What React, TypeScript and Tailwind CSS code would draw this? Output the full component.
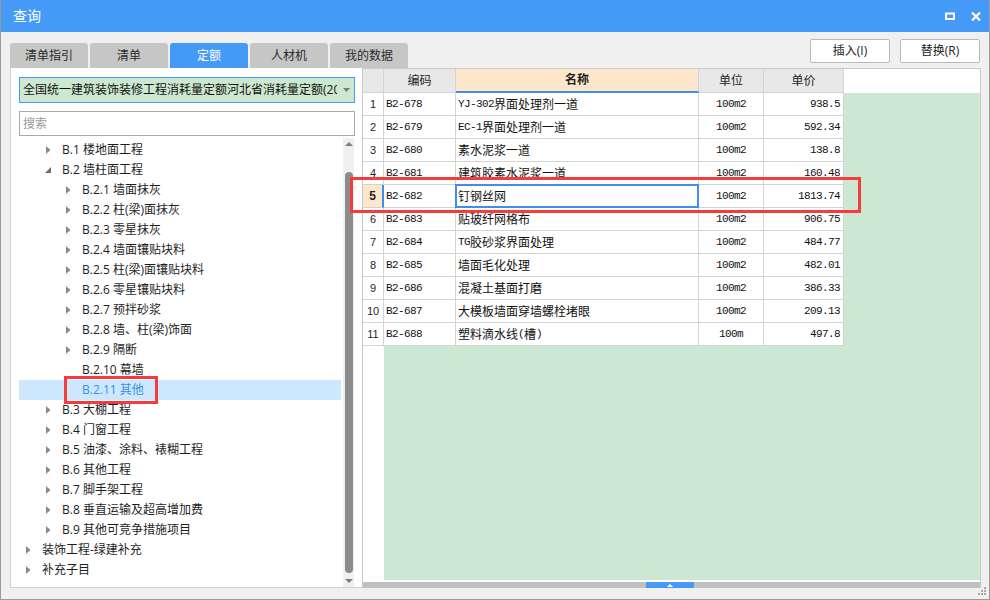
import React from "react";

const F = "font-['Open_Sans','Noto_Sans_CJK_SC',sans-serif]";

function Mixed({ text }: { text: string }) {
  const parts = text.match(/[\x00-\x7f]+|[^\x00-\x7f]+/g) || [];
  return (
    <>
      {parts.map((p, i) =>
        /^[\x00-\x7f]+$/.test(p) ? (
          <span key={i} className="font-['Liberation_Mono',monospace] text-[11px] tracking-[-0.6px]">
            {p}
          </span>
        ) : (
          <span key={i} className="font-['Noto_Sans_CJK_SC',sans-serif] text-[12px]">
            {p}
          </span>
        )
      )}
    </>
  );
}

type Node = { l: 0 | 1 | 2; t: string; a: "r" | "d" | null; sel?: boolean };

const tree: Node[] = [
  { l: 1, t: "B.1 楼地面工程", a: "r" },
  { l: 1, t: "B.2 墙柱面工程", a: "d" },
  { l: 2, t: "B.2.1 墙面抹灰", a: "r" },
  { l: 2, t: "B.2.2 柱(梁)面抹灰", a: "r" },
  { l: 2, t: "B.2.3 零星抹灰", a: "r" },
  { l: 2, t: "B.2.4 墙面镶贴块料", a: "r" },
  { l: 2, t: "B.2.5 柱(梁)面镶贴块料", a: "r" },
  { l: 2, t: "B.2.6 零星镶贴块料", a: "r" },
  { l: 2, t: "B.2.7 预拌砂浆", a: "r" },
  { l: 2, t: "B.2.8 墙、柱(梁)饰面", a: "r" },
  { l: 2, t: "B.2.9 隔断", a: "r" },
  { l: 2, t: "B.2.10 幕墙", a: null },
  { l: 2, t: "B.2.11 其他", a: null, sel: true },
  { l: 1, t: "B.3 大棚工程", a: "r" },
  { l: 1, t: "B.4 门窗工程", a: "r" },
  { l: 1, t: "B.5 油漆、涂料、裱糊工程", a: "r" },
  { l: 1, t: "B.6 其他工程", a: "r" },
  { l: 1, t: "B.7 脚手架工程", a: "r" },
  { l: 1, t: "B.8 垂直运输及超高增加费", a: "r" },
  { l: 1, t: "B.9 其他可竞争措施项目", a: "r" },
  { l: 0, t: "装饰工程-绿建补充", a: "r" },
  { l: 0, t: "补充子目", a: "r" },
];

const rows = [
  ["B2-678", "YJ-302界面处理剂一道", "100m2", "938.5"],
  ["B2-679", "EC-1界面处理剂一道", "100m2", "592.34"],
  ["B2-680", "素水泥浆一道", "100m2", "138.8"],
  ["B2-681", "建筑胶素水泥浆一道", "100m2", "160.48"],
  ["B2-682", "钉钢丝网", "100m2", "1813.74"],
  ["B2-683", "贴玻纤网格布", "100m2", "906.75"],
  ["B2-684", "TG胶砂浆界面处理", "100m2", "484.77"],
  ["B2-685", "墙面毛化处理", "100m2", "482.01"],
  ["B2-686", "混凝土基面打磨", "100m2", "386.33"],
  ["B2-687", "大模板墙面穿墙螺栓堵眼", "100m2", "209.13"],
  ["B2-688", "塑料滴水线(槽)", "100m", "497.8"],
];

const padCls = ["pl-[3px]", "pl-[23px]", "pl-[43px]"];

function Arrow({ a }: { a: "r" | "d" | null }) {
  if (a === "r")
    return (
      <svg width="5" height="8" viewBox="0 0 5 8">
        <polygon points="0,0 4.5,4 0,8" fill="#8a8a8a" />
      </svg>
    );
  if (a === "d")
    return (
      <svg width="6" height="6" viewBox="0 0 6 6">
        <polygon points="6,0 6,6 0,6" fill="#6f6f6f" />
      </svg>
    );
  return null;
}

const tabs = ["清单指引", "清单", "定额", "人材机", "我的数据"];

export default function App() {
  return (
    <div className={`relative w-[990px] h-[600px] overflow-hidden bg-[#f0f0f0] border-x border-b border-[#9a9a9a] ${F} text-[12px] text-[#1f1f1f]`}>
      {/* title bar */}
      <div className="h-[32px] bg-[#4599f7] flex items-center pl-[12px] pr-[8px]">
        <span className="text-[14px] text-white leading-none">查询</span>
        <div className="ml-auto flex items-center gap-[16px]">
          <svg width="10" height="8" viewBox="0 0 10 8">
            <rect x="1" y="1.5" width="8" height="5.5" fill="none" stroke="#fff" strokeWidth="2" />
          </svg>
          <svg width="10" height="9" viewBox="0 0 10 9">
            <path d="M1 0.5 L9 8.5 M9 0.5 L1 8.5" stroke="#fff" strokeWidth="2.2" />
          </svg>
        </div>
      </div>

      {/* tabs + buttons */}
      <div className="flex justify-between pl-[9px] pr-[9px] pt-[7px] h-[36px]">
        <div className="flex gap-[2px] self-end">
          {tabs.map((t) => (
            <div
              key={t}
              className={
                t === "定额"
                  ? "w-[78px] h-[25px] rounded-t-[3px] bg-[#4599f7] text-white flex items-center justify-center text-[12px]"
                  : "w-[78px] h-[25px] rounded-t-[3px] bg-[#c6c6c6] text-[#2a2a2a] flex items-center justify-center text-[12px]"
              }
            >
              {t}
            </div>
          ))}
        </div>
        <div className="flex gap-[10px] self-start">
          <div className="w-[80px] h-[24px] bg-white border border-[#b9b9b9] rounded-[2px] flex items-center justify-center text-[12px] text-[#222]">
            插入(I)
          </div>
          <div className="w-[80px] h-[24px] bg-white border border-[#b9b9b9] rounded-[2px] flex items-center justify-center text-[12px] text-[#222]">
            替换(R)
          </div>
        </div>
      </div>

      {/* main */}
      <div className="flex ml-[9px] mr-[8px] h-[520px]">
        {/* left panel */}
        <div className="w-[352px] bg-white border-l border-b border-[#d0d0d0] flex flex-col pl-[8px] pt-[9px]">
          <div className="w-[336px] h-[26px] bg-[#cde8d2] border border-[#4599f7] flex items-center pl-[3px] pr-[4px]">
            <span className="flex-1 overflow-hidden whitespace-nowrap text-[12px] text-[#111] leading-[20px]">
              全国统一建筑装饰装修工程消耗量定额河北省消耗量定额(20
            </span>
            <svg width="7" height="4" viewBox="0 0 7 4" className="ml-[6px] shrink-0">
              <polygon points="0,0 7,0 3.5,4" fill="#7a7a7a" />
            </svg>
          </div>
          <div className="w-[336px] h-[25px] mt-[8px] bg-white border border-[#a9a9a9] flex items-center pl-[3px]">
            <span className="text-[12px] text-[#9a9a9a]">搜索</span>
          </div>
          <div className="flex mt-[2px] flex-1 min-h-0">
            <div className="w-[324px] pt-[2px]">
              {tree.map((n) => (
                <div
                  key={n.t}
                  className={`w-[322px] h-[20px] flex items-center ${padCls[n.l]} ${n.sel ? "bg-[#cce8ff] text-[#3b8ee8]" : "text-[#1e1e1e]"}`}
                >
                  <span className="w-[12px] flex items-center justify-center">
                    <Arrow a={n.a} />
                  </span>
                  <span className="ml-[8px] text-[12px] leading-[20px] whitespace-nowrap">{n.t}</span>
                </div>
              ))}
            </div>
            <div className="w-[11px] bg-[#f0f0f0] flex flex-col">
              <div className="h-[12px] flex items-center justify-center">
                <svg width="8" height="4" viewBox="0 0 8 4">
                  <polygon points="0,4 8,4 4,0" fill="#7d7d7d" />
                </svg>
              </div>
              <div className="h-[22px]" />
              <div className="h-[401px] mx-[1.5px] rounded-full bg-[#8c8c8c]" />
              <div className="h-[2px]" />
              <div className="h-[11px] flex items-center justify-center">
                <svg width="8" height="4" viewBox="0 0 8 4">
                  <polygon points="0,0 8,0 4,4" fill="#7d7d7d" />
                </svg>
              </div>
            </div>
          </div>
        </div>

        {/* right panel */}
        <div className="flex-1 flex flex-col bg-white border-l border-t border-r border-[#c9c9c9]">
          {/* header */}
          <div className="flex h-[24px] text-[12px]">
            <div className="w-[21px] h-full bg-[#e8e8e8] border-r border-b border-[#d3d3d3]" />
            <div className="w-[72px] h-full bg-[#e8e8e8] border-r border-b border-[#d3d3d3] flex items-center justify-center">编码</div>
            <div className="w-[243px] h-full bg-[#fde6c9] border-r border-[#d3d3d3] border-b-2 border-b-[#3d8ef0] flex items-center justify-center font-bold">名称</div>
            <div className="w-[65px] h-full bg-[#e8e8e8] border-r border-b border-[#d3d3d3] flex items-center justify-center">单位</div>
            <div className="w-[80px] h-full bg-[#e8e8e8] border-r border-b border-[#d3d3d3] flex items-center justify-center">单价</div>
            <div className="flex-1 h-full bg-white" />
          </div>
          {/* body */}
          <div className="flex flex-1 min-h-0">
            <div className="w-[21px] bg-white">
              {rows.map((r, i) => (
                <div
                  key={r[0]}
                  className={
                    i === 4
                      ? "h-[23px] bg-[#fde6c9] border-r-2 border-r-[#3d8ef0] border-b border-b-[#d3d3d3] flex items-center justify-center font-['Liberation_Sans',sans-serif] text-[12px] font-bold"
                      : "h-[23px] border-r border-b border-[#d3d3d3] flex items-center justify-center font-['Liberation_Sans',sans-serif] text-[11px]"
                  }
                >
                  {i + 1}
                </div>
              ))}
            </div>
            <div className="flex-1 bg-[#cde8d2]">
              {rows.map((r, i) => (
                <div key={r[0]} className="flex w-[460px] h-[23px] bg-white text-[#111]">
                  <div className="w-[72px] h-full border-r border-b border-[#d3d3d3] flex items-center pl-[2px] whitespace-nowrap">
                    <Mixed text={r[0]} />
                  </div>
                  <div className="relative w-[243px] h-full border-r border-b border-[#d3d3d3] flex items-center pl-[2px] whitespace-nowrap">
                    <Mixed text={r[1]} />
                    {i === 4 && (
                      <div className="absolute left-[-1px] top-[-1px] right-[-1px] bottom-[-1px] border-2 border-[#3d8ef0]" />
                    )}
                  </div>
                  <div className="w-[65px] h-full border-r border-b border-[#d3d3d3] flex items-center justify-center whitespace-nowrap">
                    <Mixed text={r[2]} />
                  </div>
                  <div className="w-[80px] h-full border-r border-b border-[#d3d3d3] flex items-center justify-end pr-[3px] whitespace-nowrap">
                    <Mixed text={r[3]} />
                  </div>
                </div>
              ))}
            </div>
          </div>
          <div className="h-[2px] bg-white" />
          <div className="h-[6px] bg-[#c0c0c0] flex pl-[283px]">
            <div className="w-[48px] h-full bg-[#4599f7] flex items-center justify-center">
              <svg width="6" height="3" viewBox="0 0 6 3">
                <polygon points="0,3 6,3 3,0" fill="#fff" />
              </svg>
            </div>
          </div>
        </div>
      </div>

      {/* red highlight boxes */}
      <div className="absolute left-[349px] top-[177px] w-[511px] h-[36px] border-[3px] border-[#f53b3b]" />
      <div className="absolute left-[63px] top-[376px] w-[94px] h-[28px] border-[3px] border-[#f53b3b]" />

      {/* resize grip */}
      <div className="absolute right-[2px] bottom-[3px]">
        <svg width="9" height="9" viewBox="0 0 9 9">
          <rect x="6" y="0" width="2" height="2" fill="#a8a8a8" />
          <rect x="3" y="3" width="2" height="2" fill="#a8a8a8" />
          <rect x="6" y="3" width="2" height="2" fill="#a8a8a8" />
          <rect x="0" y="6" width="2" height="2" fill="#a8a8a8" />
          <rect x="3" y="6" width="2" height="2" fill="#a8a8a8" />
          <rect x="6" y="6" width="2" height="2" fill="#a8a8a8" />
        </svg>
      </div>
    </div>
  );
}
